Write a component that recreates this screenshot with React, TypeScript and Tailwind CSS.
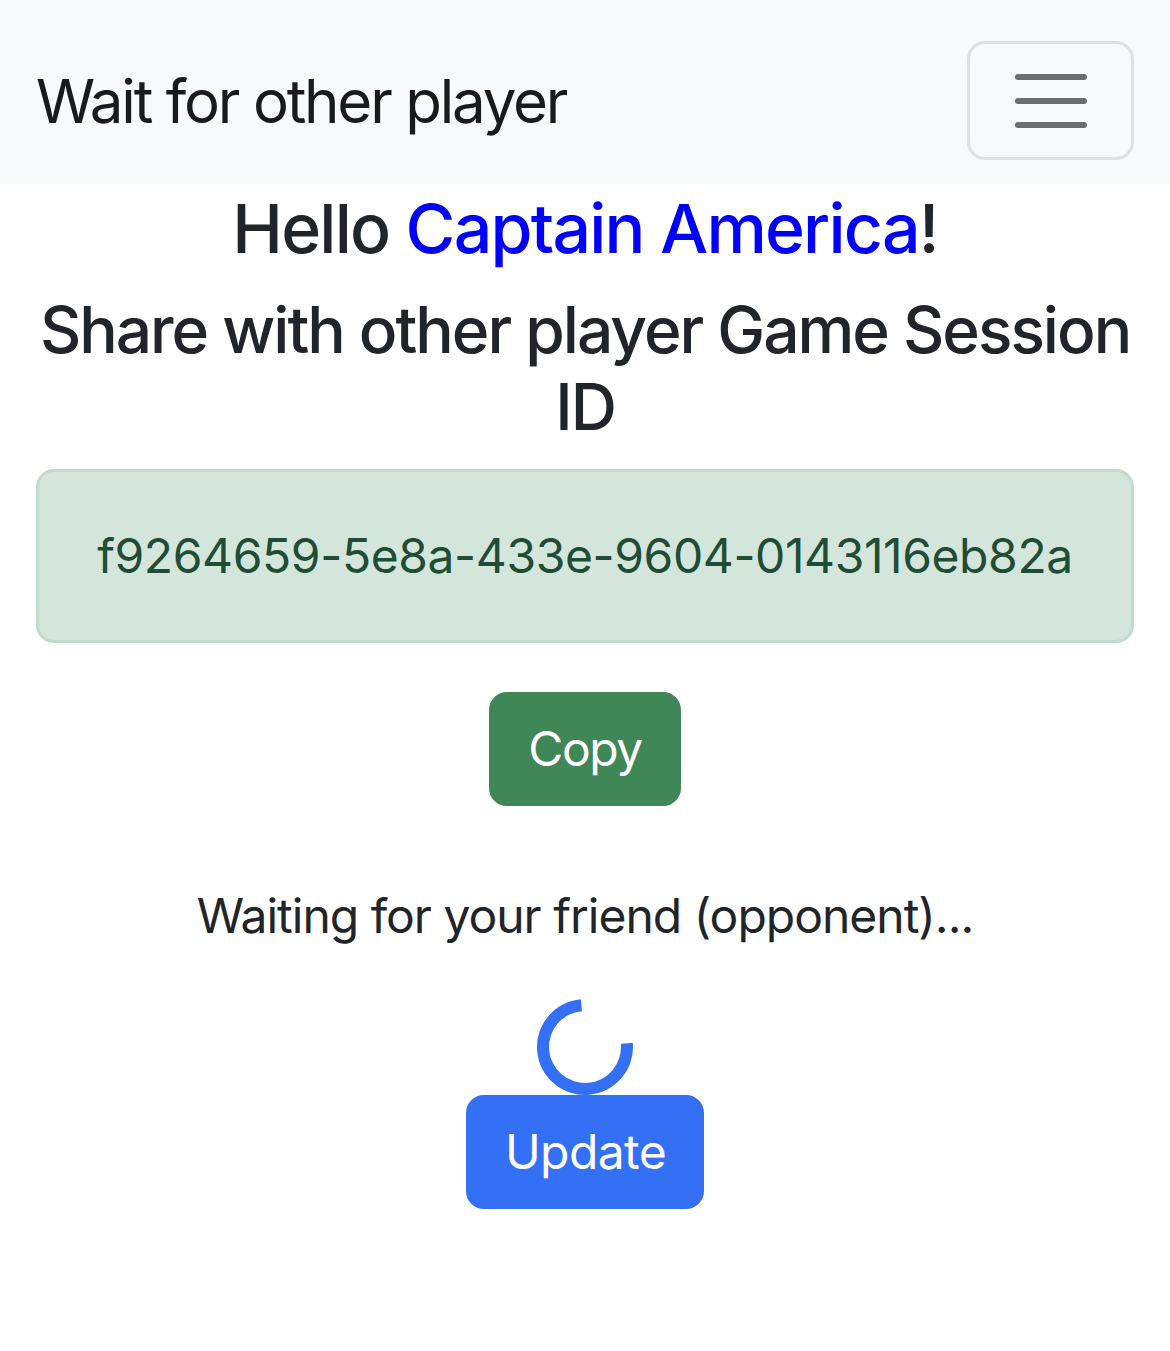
import React from 'react';

function Hamburger() {
  return (
    <svg width="90" height="90" viewBox="0 0 30 30" className="block">
      <path
        stroke="#6b6d70"
        strokeLinecap="round"
        strokeMiterlimit="10"
        strokeWidth="2"
        d="M4 7h22M4 15h22M4 23h22"
      />
    </svg>
  );
}

export default function App() {
  return (
    <div className="min-h-[1351px] bg-white text-[#212529]" style={{ fontFamily: 'Inter, "Noto Sans", sans-serif' }}>
      {/* navbar */}
      <nav className="bg-[#f8f9fa] h-[184px] px-[36px] pt-[41px] pb-[24px] flex items-start justify-between">
        <div className="h-[119px] flex items-center">
          <span className="text-[60px] leading-[90px] tracking-[-2.2px] text-[#1a1a1a]">Wait for other player</span>
        </div>
        <button className="w-[167px] h-[119px] border-[3px] border-[#dfe0e1] rounded-[18px] flex items-center justify-center">
          <Hamburger />
        </button>
      </nav>

      <main className="px-[36px] text-center">
        <h2 className="text-[68px] leading-[89px] font-medium tracking-[-1.8px] mb-[24px]">
          Hello <span className="text-[#0000ff]">Captain America</span>!
        </h2>
        <h4 className="text-[64px] leading-[77px] font-medium tracking-[-2px] -mt-[6px]">
          Share with other player Game Session ID
        </h4>

        <div className="bg-[#d4e6dc] border-[3px] border-[#c1dccd] rounded-[18px] py-[48px] text-[#1f4d35] text-[48px] leading-[72px] tracking-[-0.4px] mb-[49px] mt-[24px]">
          f9264659-5e8a-433e-9604-0143116eb82a
        </div>

        <button className="bg-[#408758] text-white text-[48px] leading-[72px] tracking-[-1.5px] px-[36px] py-[18px] rounded-[18px] border-[3px] border-[#408758] w-[192px]">
          Copy
        </button>

        <p className="text-[48px] leading-[72px] tracking-[-1px] mt-[74px] mb-[47px]">Waiting for your friend (opponent)...</p>

        <div className="flex flex-col items-center">
          <div className="w-[96px] h-[96px] rounded-full border-[12px] border-[#3370f5] border-r-transparent rotate-[-50deg]" />
          <button className="bg-[#3370f5] text-white text-[48px] leading-[72px] tracking-[-0.6px] px-[36px] py-[18px] rounded-[18px] border-[3px] border-[#3370f5] w-[238px]">
            Update
          </button>
        </div>
      </main>
    </div>
  );
}
